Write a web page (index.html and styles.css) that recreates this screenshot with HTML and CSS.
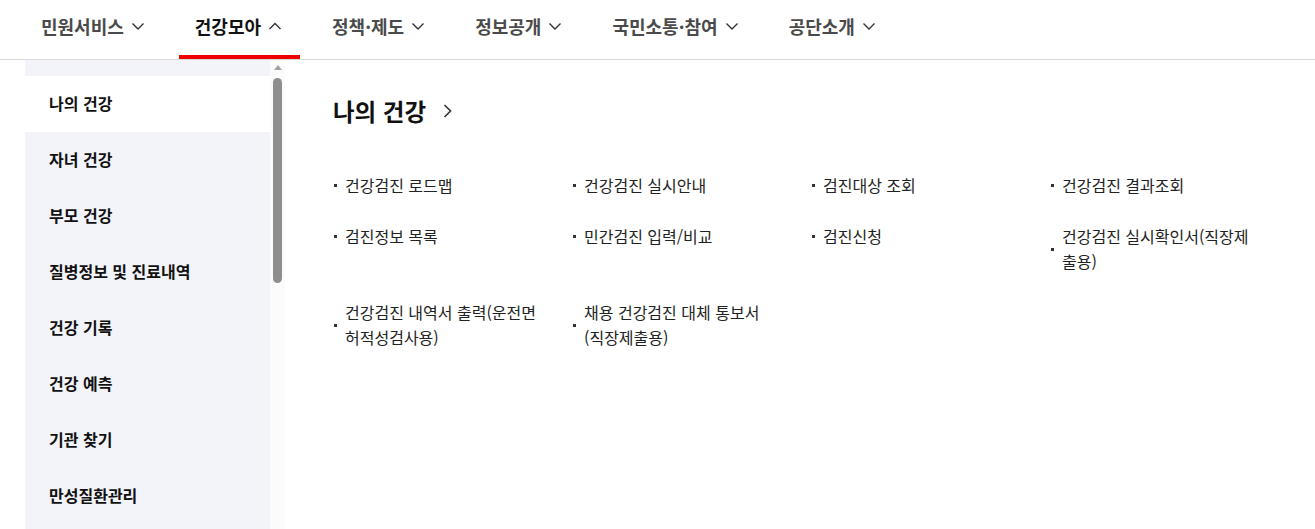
FILE: index.html
```html
<!DOCTYPE html>
<html lang="ko">
<head>
<meta charset="utf-8">
<title>건강모아</title>
<link rel="stylesheet" href="styles.css">
</head>
<body>
<header class="gnb">
  <nav class="gnb-menu">
    <a class="gnb-item" href="#">민원서비스<svg class="chev" viewBox="0 0 14 12"><path d="M1.5 3.5 L7 9 L12.5 3.5"/></svg></a>
    <a class="gnb-item active" href="#">건강모아<svg class="chev" viewBox="0 0 14 12"><path d="M1.5 9 L7 3.5 L12.5 9"/></svg></a>
    <a class="gnb-item" href="#">정책·제도<svg class="chev" viewBox="0 0 14 12"><path d="M1.5 3.5 L7 9 L12.5 3.5"/></svg></a>
    <a class="gnb-item" href="#">정보공개<svg class="chev" viewBox="0 0 14 12"><path d="M1.5 3.5 L7 9 L12.5 3.5"/></svg></a>
    <a class="gnb-item" href="#">국민소통·참여<svg class="chev" viewBox="0 0 14 12"><path d="M1.5 3.5 L7 9 L12.5 3.5"/></svg></a>
    <a class="gnb-item" href="#">공단소개<svg class="chev" viewBox="0 0 14 12"><path d="M1.5 3.5 L7 9 L12.5 3.5"/></svg></a>
  </nav>
</header>
<div class="panel">
  <aside class="side">
    <ul class="side-list">
      <li class="side-item current">나의 건강</li>
      <li class="side-item">자녀 건강</li>
      <li class="side-item">부모 건강</li>
      <li class="side-item">질병정보 및 진료내역</li>
      <li class="side-item">건강 기록</li>
      <li class="side-item">건강 예측</li>
      <li class="side-item">기관 찾기</li>
      <li class="side-item">만성질환관리</li>
    </ul>
  </aside>
  <div class="scrollbar">
    <span class="scroll-up"></span>
    <span class="scroll-thumb"></span>
  </div>
  <main class="content">
    <h2 class="title">나의 건강<svg class="title-chev" viewBox="0 0 10 14"><path d="M1.5 1 L7.5 7 L1.5 13"/></svg></h2>
    <ul class="links">
      <li>건강검진 로드맵</li>
      <li>건강검진 실시안내</li>
      <li>검진대상 조회</li>
      <li>건강검진 결과조회</li>
      <li>검진정보 목록</li>
      <li>민간검진 입력/비교</li>
      <li>검진신청</li>
      <li>건강검진 실시확인서(직장제출용)</li>
      <li>건강검진 내역서 출력(운전면허적성검사용)</li>
      <li>채용 건강검진 대체 통보서(직장제출용)</li>
    </ul>
  </main>
</div>
</body>
</html>
```

FILE: styles.css
```css
* { box-sizing: border-box; }
html, body { margin: 0; padding: 0; background: #fff; }
body {
  font-family: "Noto Sans CJK KR", "Noto Sans", sans-serif;
  color: #222;
  height: 529px;
  overflow: hidden;
}
ul { margin: 0; padding: 0; list-style: none; }

.gnb {
  height: 60px;
  border-bottom: 1px solid #dadada;
  padding-left: 25px;
}
.gnb-menu {
  display: flex;
  gap: 16px;
  height: 59px;
}
.gnb-item {
  display: flex;
  align-items: center;
  height: 59px;
  padding: 0 18px 7px 16px;
  font-size: 18px;
  font-weight: 700;
  color: #4a4a4a;
  text-decoration: none;
}
.gnb-item.active {
  color: #111;
  box-shadow: inset 0 -4px 0 #ee0000;
}
.chev {
  width: 14px;
  height: 12px;
  margin-left: 7px;
  fill: none;
  stroke: #333;
  stroke-width: 1.4;
}

.panel {
  display: flex;
  height: 469px;
}
.side {
  width: 245px;
  margin-left: 25px;
  background: #f3f4f9;
  padding-top: 16px;
}
.side-item {
  height: 56px;
  display: flex;
  align-items: center;
  padding: 0 0 3px 24px;
  font-size: 16px;
  font-weight: 700;
  color: #111;
}
.side-item.current { background: #fff; }

.scrollbar {
  width: 15px;
  background: #fbfbfb;
  display: flex;
  flex-direction: column;
  align-items: center;
  padding-top: 5px;
}
.scroll-up {
  width: 0;
  height: 0;
  border-left: 4px solid transparent;
  border-right: 4px solid transparent;
  border-bottom: 5px solid #a3a3a3;
  margin-left: 1px;
}
.scroll-thumb {
  width: 9px;
  height: 205px;
  margin-top: 8px;
  border-radius: 5px;
  background: #8e8e8e;
}

.content {
  flex: 1;
  padding: 35px 0 0 48px;
}
.title {
  margin: 0;
  display: flex;
  align-items: center;
  font-size: 23.5px;
  line-height: 32px;
  font-weight: 700;
  color: #111;
}
.title-chev {
  width: 10px;
  height: 14px;
  margin-left: 17px;
  fill: none;
  stroke: #333;
  stroke-width: 1.6;
}
.links {
  margin-top: 46px;
  display: grid;
  grid-template-columns: repeat(4, 205px);
  column-gap: 34px;
  row-gap: 26px;
  align-items: start;
}
.links li {
  display: flex;
  align-items: center;
  font-size: 16px;
  line-height: 25px;
  color: #222;
}
.links li::before {
  content: "";
  flex: none;
  width: 3px;
  height: 3px;
  background: #333;
  margin: 0 8px 0 1px;
}
```
